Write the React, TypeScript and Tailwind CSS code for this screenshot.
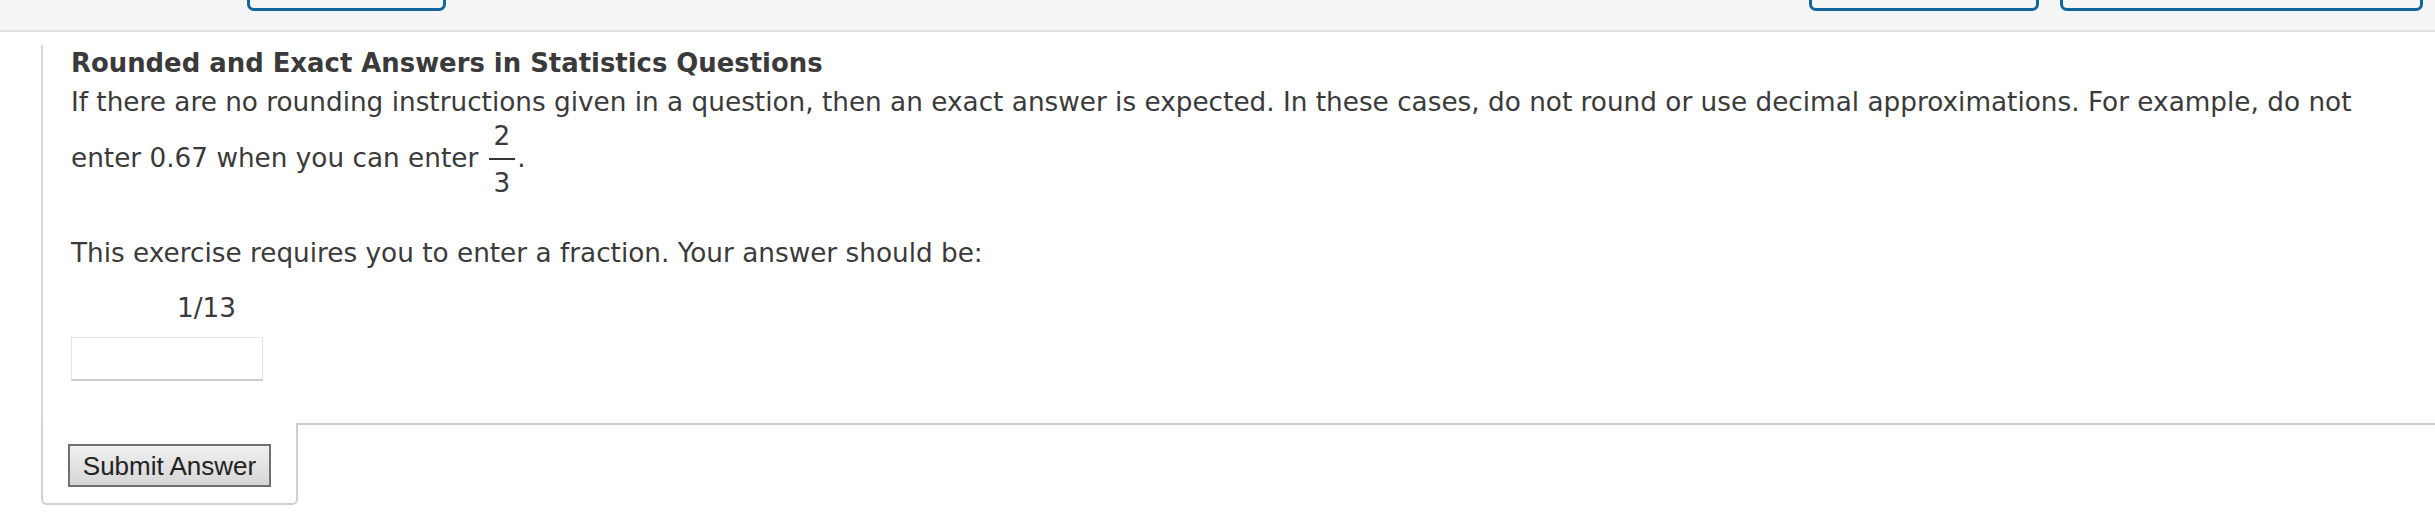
const Fraction = ({ top, bottom }: { top: string; bottom: string }) => {
  return (
    <span className="inline-flex flex-col items-center align-middle mx-[2px]">
      <span className="leading-[24px] pb-[10px] px-[5px]">{top}</span>
      <span className="block h-[2px] w-full bg-[#333]" />
      <span className="leading-[24px] pt-[11px] px-[5px]">{bottom}</span>
    </span>
  );
};

const TopBar = () => {
  return (
    <div className="h-[32px] bg-[#f5f5f5] border-b-2 border-b-[#e0e0e0] flex items-start pl-[247px] pr-[12px]">
      <div className="w-[199px] h-[11px] border-x-[3px] border-b-[3px] border-[#0f659c] rounded-b-[7px]" />
      <div className="flex-1" />
      <div className="flex gap-[21px]">
        <div className="w-[230px] h-[11px] border-x-[3px] border-b-[3px] border-[#0f659c] rounded-b-[7px]" />
        <div className="w-[363px] h-[11px] border-x-[3px] border-b-[3px] border-[#0f659c] rounded-b-[7px]" />
      </div>
    </div>
  );
};

export default function App() {
  return (
    <div className="w-full min-h-[524px] bg-white text-[#3a3a3a] text-[26.3px] font-['DejaVu_Sans',Verdana,sans-serif]">
      <TopBar />
      <div className="ml-[41px] border-l-2 border-l-[#d6d6d6] pl-[28px] pb-[42px]">
        <div className="mt-[13px] leading-[36px] font-bold text-[25.9px]">
          Rounded and Exact Answers in Statistics Questions
        </div>
        <div className="mt-[3px] leading-[36px] whitespace-nowrap">
          If there are no rounding instructions given in a question, then an exact answer is expected. In these cases, do not round or use decimal approximations. For example, do not
        </div>
        <div className="mt-[4px] leading-[36px] whitespace-nowrap">
          enter 0.67 when you can enter <Fraction top="2" bottom="3" />.
        </div>
        <div className="mt-[40px] leading-[36px]">
          This exercise requires you to enter a fraction. Your answer should be:
        </div>
        <div className="mt-[19px] ml-[106px] leading-[36px]">1/13</div>
        <input
          type="text"
          className="mt-[11px] block w-[192px] h-[44px] bg-white border border-[#e4e4e4] border-b-2 border-b-[#cdcdcd] outline-none"
        />
      </div>
      <div className="flex">
        <div className="ml-[41px] w-[257px] border-x-2 border-b-2 border-[#d0d0d0] rounded-b-[6px] pl-[25px] pt-[21px] pb-[16px]">
          <button className="w-[203px] h-[43px] border-2 border-[#707070] bg-gradient-to-b from-[#f0f0f0] to-[#d6d6d6] text-[#222] text-[26px] leading-none font-['Liberation_Sans',Arial,sans-serif]">
            Submit Answer
          </button>
        </div>
        <div className="flex-1 border-t-2 border-t-[#cccccc]" />
      </div>
    </div>
  );
}
